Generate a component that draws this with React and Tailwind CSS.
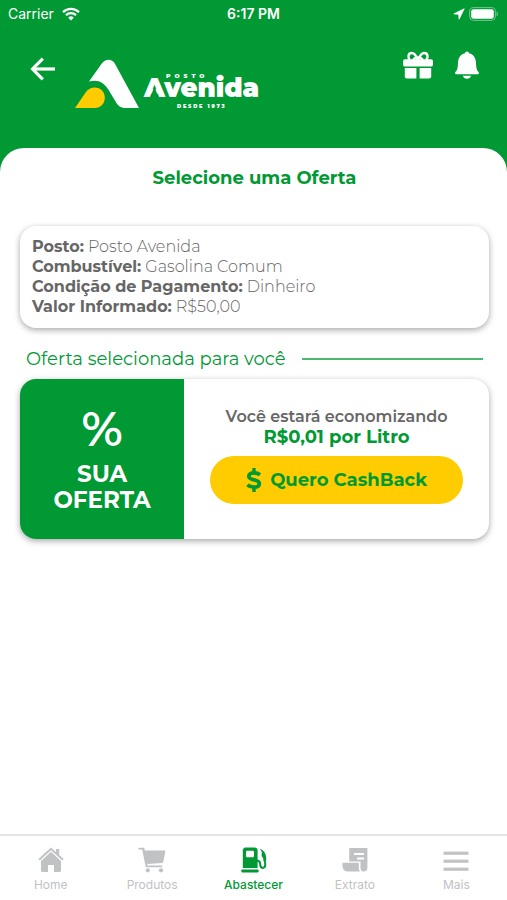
import React, { useState } from 'react';

const WifiIcon = () => (
    <svg width="18" height="14" viewBox="0 0 18 14" fill="none" stroke="#fff" strokeWidth="2.3" aria-hidden="true">
        <path d="M1 5.1a11.6 11.6 0 0 1 16 0" />
        <path d="M4 8.2a7.3 7.3 0 0 1 10 0" />
        <path d="M9 13.6 6.2 10.7a4 4 0 0 1 5.6 0Z" fill="#fff" stroke="none" />
    </svg>
);

const LocationIcon = () => (
    <svg width="12" height="12" viewBox="0 0 12 12" fill="#fff" stroke="#fff" strokeWidth="0.8" strokeLinejoin="round" aria-hidden="true">
        <path d="M11.2.8.8 5.9l4.900.400.400 4.900Z" />
    </svg>
);

const BatteryIcon = () => (
    <svg width="30" height="14" viewBox="0 0 30 14" aria-hidden="true">
        <rect x="0.6" y="0.6" width="25.8" height="12.8" rx="4" fill="none" stroke="#fff" strokeOpacity=".45" />
        <rect x="2.2" y="2.2" width="22.6" height="9.6" rx="2.4" fill="#fff" />
        <path d="M27.6 4.6c1.6.6 1.6 4.2 0 4.8Z" fill="#fff" fillOpacity=".5" />
    </svg>
);

const BackIcon = () => (
    <svg width="26" height="24" viewBox="0 0 26 24" fill="none" stroke="#fff" strokeWidth="3.2" aria-hidden="true">
        <path d="M25 12H3" />
        <path d="M12.8 1.6 2.6 12l10.2 10.4" strokeLinejoin="miter" />
    </svg>
);

const GiftIcon = () => (
    <svg width="30" height="28" viewBox="0 0 30 28" fill="#fff" aria-hidden="true">
        <path
            d="M14.8 8.6C13 4.4 11.4 2 8.8 2c-3.600 0-4.400 4.200-2 6.800M15.2 8.6c1.8-4.2 3.4-6.600 6-6.600 3.600 0 4.400 4.200 2 6.800M10.6 9c0-1.400 1.600-2.400 4.400-2.400S19.400 7.600 19.400 9"
            fill="none"
            stroke="#fff"
            strokeWidth="2.4"
        />
        <path d="M2 8.200h26a2 2 0 0 1 2 2v3.600a1.600 1.600 0 0 1-1.600 1.600H1.600A1.600 1.600 0 0 1 0 13.800v-3.600a2 2 0 0 1 2-2Z" />
        <path d="M1.800 17h11.600v10.400H3.800a2 2 0 0 1-2-2Z" />
        <path d="M16.600 17h11.600v8.400a2 2 0 0 1-2 2h-9.600Z" />
    </svg>
);

const BellIcon = () => (
    <svg width="24" height="28" viewBox="0 0 24 28" fill="#fff" aria-hidden="true">
        <path d="M12 .4c1.200 0 1.900.8 2 1.800 4.700 1.200 6.800 4.900 7 9.800.2 5 .8 7.200 2.400 8.800 1 1.100.4 2.400-1 2.400H1.600c-1.400 0-2-1.300-1-2.400C2.200 19.200 2.800 17 3 12c.2-4.900 2.300-8.600 7-9.800.1-1 .8-1.800 2-1.800Z" />
        <path d="M7.800 24.800h8.400c-.6 1.800-2.200 2.900-4.200 2.900s-3.600-1.100-4.200-2.900Z" />
    </svg>
);

const Logo = () => (
    <svg width="186" height="52" viewBox="0 0 186 52" role="img" aria-label="Posto Avenida">
        <path
            d="M14 22.500 26.600 4.700C30.400-.3 36.600-.7 39.800 4.500L64 49H50.400C45.600 49 43 46.800 40.800 43L33.200 30.300C28.600 22.900 22.600 20.100 14 22.500Z"
            fill="#fff"
        />
        <path d="M0 49 10.600 33.600C13 30.200 16.200 28.600 19.800 28.600c5.800 0 10 4.600 10 10.200S25.600 49 19.800 49Z" fill="#fc0" />
        <g fill="#fff" className="font-['Montserrat','Inter',sans-serif]">
            <text x="91" y="19" fontSize="6" fontWeight="900" letterSpacing="4">POSTO</text>
            <text x="69" y="38" fontSize="26" fontWeight="900">Avenida</text>
            <text x="102" y="49" fontSize="5" fontWeight="900" letterSpacing="1.800">DESDE 1973</text>
        </g>
        {/* opens the crossbar of the A */}
        <path d="M75.600 38.500 79.400 26.500 83.200 38.500Z" fill="#009933" />
    </svg>
);

const DollarIcon = () => (
    <svg width="16" height="26" viewBox="0 0 16 26" fill="none" stroke="#009933" aria-hidden="true">
        <path d="M8 1v5M8 20v5" strokeWidth="3.400" />
        <path
            d="M14 7.800C12.400 6.400 10.400 5.800 8 5.800c-3.200 0-5.200 1.400-5.200 3.500 0 2.300 2 2.900 5.200 3.600 3.400.7 5.300 1.500 5.300 3.800 0 2.200-2.100 3.500-5.300 3.500-2.600 0-4.800-.7-6.600-2.300"
            strokeWidth="3.800"
        />
    </svg>
);

const HomeIcon = () => (
    <svg width="26" height="26" viewBox="0 0 26 26" fill="currentColor" aria-hidden="true">
        <path d="M13 4.800 23 14v9.600A1.400 1.400 0 0 1 21.600 25H16v-7h-6v7H4.400A1.400 1.400 0 0 1 3 23.600V14Z" />
        <path d="M13 .6 18 5V2h3.200v5.900L25.600 12l-1.300 1.400L13 3.200 1.700 13.400.4 12Z" />
    </svg>
);

const CartIcon = () => (
    <svg width="28" height="26" viewBox="0 0 28 26" fill="currentColor" aria-hidden="true">
        <path d="M1.200.8h4.200a1 1 0 0 1 1 .8l.4 1.800h19.600a1 1 0 0 1 1 1.200L25.200 15a1.200 1.200 0 0 1-1 .9L9.200 17l.4 1.400h14.600v1.800H8.600a1 1 0 0 1-1-.8L4.200 2.600h-3a.9.9 0 0 1 0-1.800Z" />
        <circle cx="9.800" cy="23.300" r="2.100" />
        <circle cx="23" cy="23.300" r="2.100" />
    </svg>
);

const PumpIcon = () => (
    <svg width="26" height="26" viewBox="0 0 26 26" aria-hidden="true">
        <path
            fillRule="evenodd"
            fill="currentColor"
            d="M4.600.4h8.800A3.200 3.200 0 0 1 16.600 3.600V21H1.800V3.600A3.200 3.200 0 0 1 4.600.4Zm1.600 3.400a1.200 1.200 0 0 0-1.200 1.200v4a1.200 1.200 0 0 0 1.200 1.200h5.600A1.200 1.200 0 0 0 13 9V5a1.200 1.200 0 0 0-1.200-1.200Z"
        />
        <rect x="0.400" y="22.400" width="17.200" height="3" rx="0.800" fill="currentColor" />
        <path d="M16 13.400c2.600.2 3.200 1.400 3.200 3.600 0 2.400.8 3.900 2.500 3.900s2.600-1.300 2.600-3.100c0-2.400-.9-3.600-.9-6.200" fill="none" stroke="currentColor" strokeWidth="2" />
        <path d="M18.600 1.600c3.800 1.400 6.600 5 6.600 9.400v3h-2.400c0-1.600-.4-2.600-1.300-3.600-1-1.200-1.100-2.400-.7-3.800.3-1.400-.5-2.800-2.200-5Z" fill="currentColor" />
    </svg>
);

const ReceiptIcon = () => (
    <svg width="26" height="26" viewBox="0 0 26 26" aria-hidden="true">
        <path
            fillRule="evenodd"
            fill="currentColor"
            d="M7.200 1h18.200v19.600c0 2.600-1.500 4-3.600 4-2 0-3.300-1.200-3.300-3.600v-6.600H7.200ZM12 6v2h10V6Zm3 4.400v2h7v-2Z"
        />
        <path d="M.4 15.800h16.400V21c0 1.500.4 2.700 1.200 3.600H6.600c-3.800 0-6.200-2.400-6.200-6.200Z" fill="currentColor" />
    </svg>
);

const MenuIcon = () => (
    <svg width="26" height="26" viewBox="0 0 26 26" fill="currentColor" aria-hidden="true">
        <rect x="0.500" y="4.600" width="25" height="3.200" />
        <rect x="0.500" y="12.600" width="25" height="3.200" />
        <rect x="0.500" y="20.600" width="25" height="3.200" />
    </svg>
);

const details = [
    { label: 'Posto:', value: 'Posto Avenida' },
    { label: 'Combustível:', value: 'Gasolina Comum' },
    { label: 'Condição de Pagamento:', value: 'Dinheiro' },
    { label: 'Valor Informado:', value: 'R$50,00' }
];

const tabs = [
    { id: 'home', label: 'Home', Icon: HomeIcon },
    { id: 'produtos', label: 'Produtos', Icon: CartIcon },
    { id: 'abastecer', label: 'Abastecer', Icon: PumpIcon },
    { id: 'extrato', label: 'Extrato', Icon: ReceiptIcon },
    { id: 'mais', label: 'Mais', Icon: MenuIcon }
];

const StatusBar = () => (
    <div className="grid grid-cols-3 items-center h-7 px-2 text-sm text-white font-['Inter',sans-serif]">
        <div className="flex items-center gap-2">
            <span className="font-normal">Carrier</span>
            <WifiIcon />
        </div>
        <span className="text-center font-semibold">6:17 PM</span>
        <div className="flex items-center justify-end gap-1">
            <LocationIcon />
            <BatteryIcon />
        </div>
    </div>
);

const Header = () => (
    <header className="flex items-start justify-between pl-[30px] pr-7 pt-[23px] pb-[37px]">
        <div className="flex items-start gap-[19px]">
            <button type="button" aria-label="Voltar" className="pt-1.5">
                <BackIcon />
            </button>
            <div className="pt-2">
                <Logo />
            </div>
        </div>
        <div className="flex items-center gap-[22px]">
            <button type="button" aria-label="Presentes">
                <GiftIcon />
            </button>
            <button type="button" aria-label="Notificações">
                <BellIcon />
            </button>
        </div>
    </header>
);

const App = () => {
    const [activeTab, setActiveTab] = useState('abastecer');

    return (
        <div className="flex flex-col min-h-screen bg-[#009933] font-['Montserrat','Inter',sans-serif]">
            <StatusBar />
            <Header />

            <main className="flex-grow bg-white rounded-t-3xl pl-5 pr-[18px] pt-4">
                <h1 className="text-center text-lg font-bold text-[#009933]">Selecione uma Oferta</h1>

                <dl className="mt-[34px] px-3 py-[11px] rounded-2xl bg-white text-base leading-5 text-[#666] shadow-[0_2px_6px_rgba(0,0,0,0.35)]">
                    {details.map((d) => (
                        <div key={d.label} className="flex gap-1">
                            <dt className="font-bold">{d.label}</dt>
                            <dd className="font-light">{d.value}</dd>
                        </div>
                    ))}
                </dl>

                <div className="flex items-center gap-4 mt-[17px] px-1.5">
                    <h2 className="text-lg font-normal text-[#009933]">Oferta selecionada para você</h2>
                    <div className="flex-grow h-0.5 bg-[#009933]/70" />
                </div>

                <section className="flex mt-1.5 h-40 rounded-2xl overflow-hidden bg-white shadow-[0_2px_6px_rgba(0,0,0,0.35)]">
                    <div className="w-[35%] flex flex-col items-center justify-center bg-[#009933] text-white font-semibold">
                        <span className="text-5xl">%</span>
                        <span className="mt-2 text-center text-[23px] leading-[26px] font-bold">SUA<br />OFERTA</span>
                    </div>
                    <div className="flex-grow flex flex-col items-center px-[26px] pt-7">
                        <p className="text-base leading-5 font-semibold text-[#666]">Você estará economizando</p>
                        <p className="text-lg leading-[21px] font-bold text-[#009933]">R$0,01 por Litro</p>
                        <button
                            type="button"
                            className="flex items-center justify-center gap-2 w-full h-12 mt-2 rounded-full bg-[#ffcc00] text-lg font-bold text-[#009933]"
                        >
                            <DollarIcon />
                            Quero CashBack
                        </button>
                    </div>
                </section>
            </main>

            <nav className="flex h-[66px] bg-white border-t-2 border-[#e5e5e5] font-['Inter',sans-serif]">
                {tabs.map(({ id, label, Icon }) => (
                    <button
                        key={id}
                        type="button"
                        onClick={() => setActiveTab(id)}
                        className={`flex-1 flex flex-col items-center gap-1 pt-[11px] text-xs ${activeTab === id ? 'text-[#009933] font-medium' : 'text-[#c0c2c4]'}`}
                    >
                        <Icon />
                        {label}
                    </button>
                ))}
            </nav>
        </div>
    );
};

export default App;
